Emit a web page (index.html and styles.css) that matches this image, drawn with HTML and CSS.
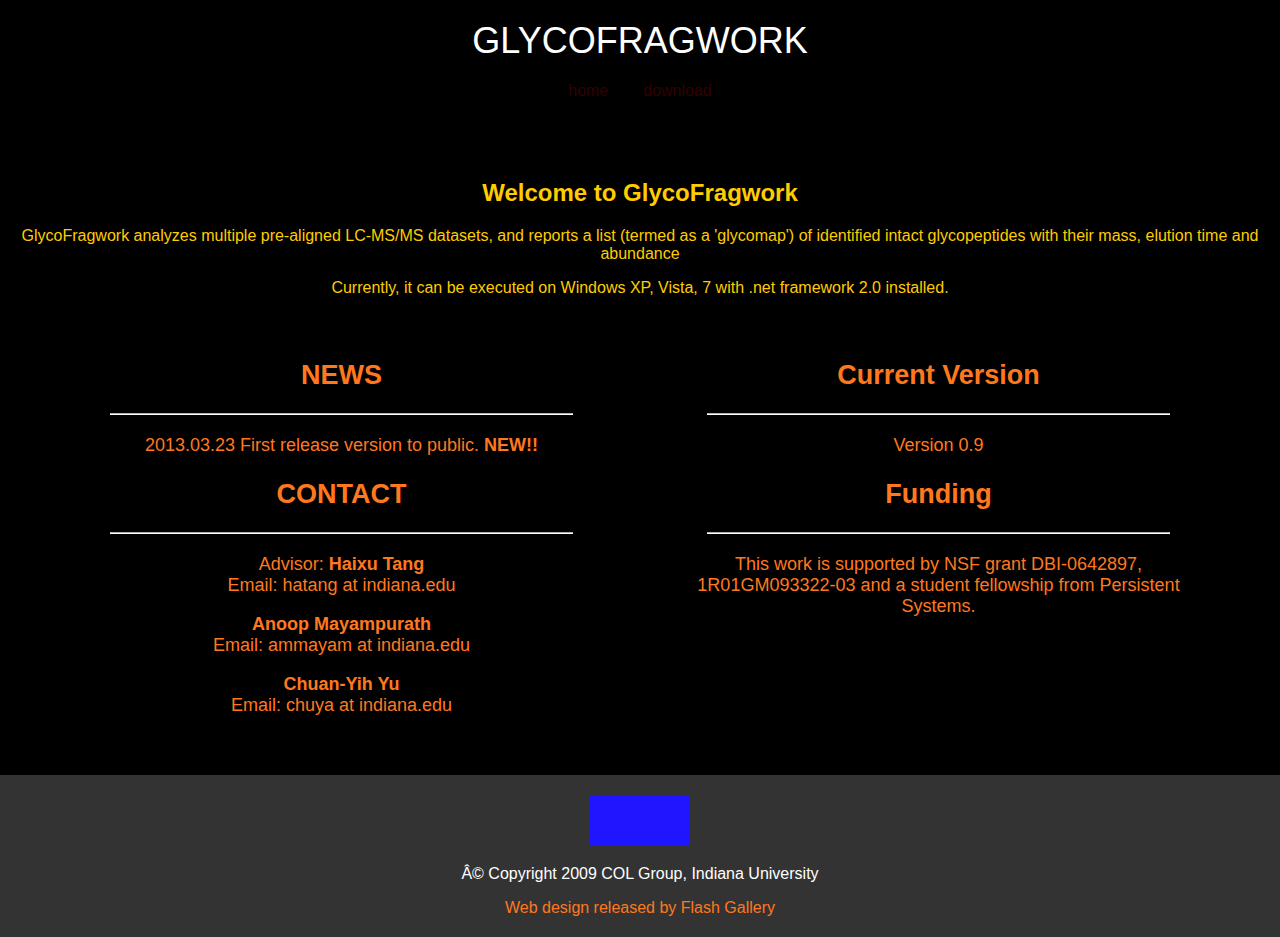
FILE: index.html
```html
<!DOCTYPE html>
<html>
<head>
<meta charset="utf-8">
<title>GlycoFragwork</title>
<link rel="stylesheet" href="styles.css">
</head>
<body>
<header class="header">
  <h1 class="site-title">GLYCOFRAGWORK</h1>
  <nav class="nav">
    <a href="#" class="nav-link">home</a>
    <a href="#" class="nav-link">download</a>
  </nav>
</header>
<main class="main">
  <section class="intro">
    <h2 class="intro-title">Welcome to GlycoFragwork</h2>
    <p class="intro-text">GlycoFragwork analyzes multiple pre-aligned LC-MS/MS datasets, and reports a list (termed as a 'glycomap') of identified intact glycopeptides with their mass, elution time and abundance</p>
    <p class="intro-text">Currently, it can be executed on Windows XP, Vista, 7 with .net framework 2.0 installed.</p>
  </section>
  <section class="columns">
    <div class="column">
      <h2 class="col-title">NEWS</h2>
      <hr class="rule">
      <p class="col-text">2013.03.23 First release version to public. <b>NEW!!</b></p>
      <h2 class="col-title">CONTACT</h2>
      <hr class="rule">
      <p class="col-text">Advisor: <b>Haixu Tang</b><br>Email: hatang at indiana.edu</p>
      <p class="col-text"><b>Anoop Mayampurath</b><br>Email: ammayam at indiana.edu</p>
      <p class="col-text"><b>Chuan-Yih Yu</b><br>Email: chuya at indiana.edu</p>
    </div>
    <div class="column">
      <h2 class="col-title">Current Version</h2>
      <hr class="rule">
      <p class="col-text">Version 0.9</p>
      <h2 class="col-title">Funding</h2>
      <hr class="rule">
      <p class="col-text">This work is supported by NSF grant DBI-0642897, 1R01GM093322-03 and a student fellowship from Persistent Systems.</p>
    </div>
  </section>
</main>
<footer class="footer">
  <div class="footer-logo"></div>
  <p class="copyright">Â© Copyright 2009 COL Group, Indiana University</p>
  <p class="credit"><a href="#" class="credit-link">Web design released by Flash Gallery</a></p>
</footer>
</body>
</html>
```
FILE: styles.css
```css
html, body {
  margin: 0;
  padding: 0;
  background: #000;
  font-family: "Liberation Sans", Arial, sans-serif;
}

.header {
  padding-top: 21px;
  text-align: center;
}

.site-title {
  margin: 0;
  font-size: 36px;
  line-height: 40px;
  font-weight: normal;
  color: #fff;
}

.nav {
  display: flex;
  justify-content: center;
  gap: 35px;
  margin-top: 20px;
  line-height: 20px;
}

.nav-link {
  color: #330000;
  font-size: 16px;
  text-decoration: none;
}

.main {
  padding: 0 8px 41px;
}

.intro {
  text-align: center;
  color: #ffcc00;
  margin-top: 78px;
}

.intro-title {
  margin: 0 0 20px;
  font-size: 24px;
  line-height: 28px;
  font-weight: bold;
}

.intro-text {
  margin: 0 0 16px;
  font-size: 16px;
  line-height: 18px;
}

.columns {
  display: flex;
  justify-content: center;
  gap: 83px;
  margin-top: 63px;
}

.column {
  width: 514px;
  text-align: center;
  color: #ff781e;
}

.col-title {
  margin: 0;
  font-size: 27px;
  line-height: 30px;
  font-weight: bold;
}

.rule {
  width: 463px;
  margin: 23px auto 20px;
  border: 0;
  border-top: 1px solid #b0b0b0;
  border-bottom: 1px solid #ffffff;
  height: 0;
}

.col-text {
  margin: 0 0 18px;
  font-size: 18px;
  line-height: 21px;
}

.col-text + .col-title {
  margin-top: 23px;
}

.footer {
  background: #333333;
  text-align: center;
  padding: 21px 0 20px;
}

.footer-logo {
  width: 100px;
  height: 50px;
  margin: 0 auto;
  background: #2015ff;
}

.copyright {
  margin: 19px 0 0;
  font-size: 16px;
  line-height: 18px;
  color: #fff;
}

.credit {
  margin: 16px 0 0;
  font-size: 16px;
  line-height: 18px;
}

.credit-link {
  color: #ff781e;
  text-decoration: none;
}
```
